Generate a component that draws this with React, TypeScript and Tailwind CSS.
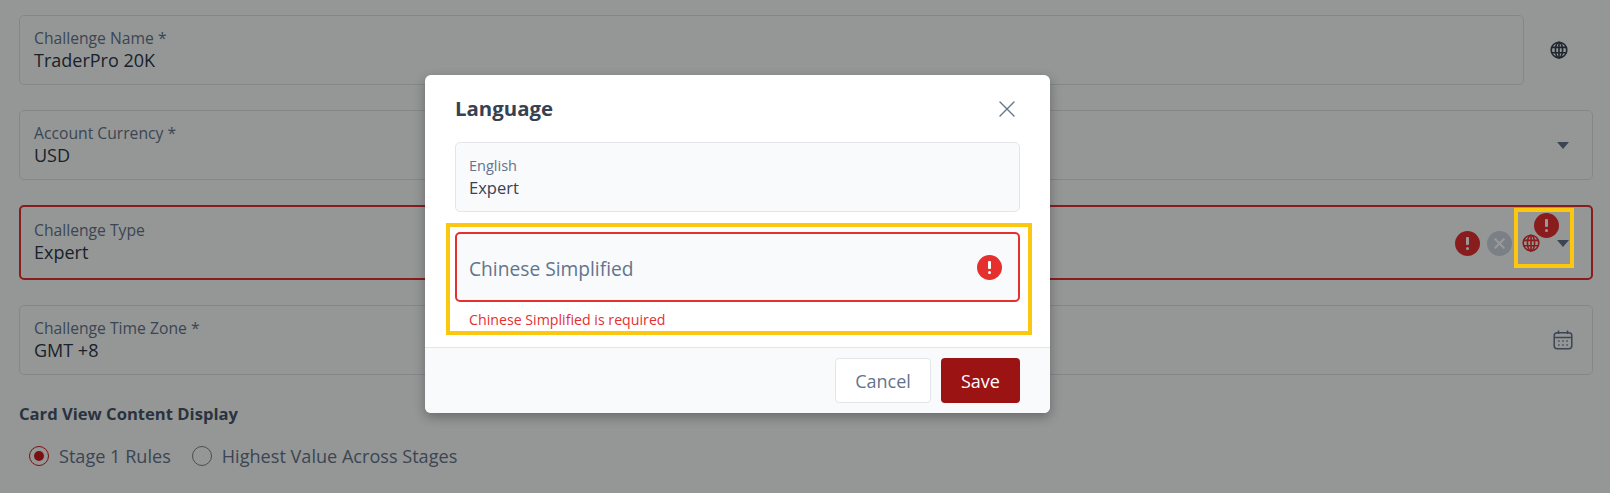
import { X } from "lucide-react";

const font = "font-['Open_Sans','Noto_Sans',sans-serif]";

function GlobeIcon({ className }: { className: string }) {
  return (
    <svg viewBox="0 0 24 24" fill="none" stroke="currentColor" strokeWidth="2.2" className={className}>
      <circle cx="12" cy="12" r="10.4" />
      <ellipse cx="12" cy="12" rx="4.8" ry="10.4" />
      <path d="M12 1.6v20.8M2 8.4h20M2 15.6h20" />
    </svg>
  );
}

function CalendarIcon({ className }: { className: string }) {
  return (
    <svg viewBox="0 0 20 20" fill="none" stroke="currentColor" strokeWidth="1.5" className={className}>
      <rect x="1.2" y="2.8" width="17.6" height="16" rx="3" />
      <path d="M5.5 0.6v3.4M14.5 0.6v3.4M1.2 7.6h17.6" />
      <path strokeWidth="1.6" d="M5.2 11h1.4M9.3 11h1.4M13.4 11h1.4M5.2 15h1.4M9.3 15h1.4M13.4 15h1.4" />
    </svg>
  );
}

function AlertDot({ className }: { className: string }) {
  return (
    <span className={`flex h-[25px] w-[25px] shrink-0 flex-col items-center justify-center rounded-full text-white ${className}`}>
      <span className="h-[8px] w-[3px] rounded-[1px] bg-white" />
      <span className="mt-[2px] h-[3px] w-[3px] rounded-full bg-white" />
    </span>
  );
}

function Caret() {
  return (
    <span className="flex w-[20px] justify-center">
      <span className="h-0 w-0 border-x-[6px] border-t-[7px] border-x-transparent border-t-[#64748b]" />
    </span>
  );
}

function Field({
  label,
  value,
  invalid,
  children,
}: {
  label: string;
  value: string;
  invalid?: boolean;
  children?: React.ReactNode;
}) {
  return (
    <div
      className={`flex items-center rounded-[5px] bg-[#f9fcfa] ${
        invalid ? "h-[75px] border-2 border-[#e53030] pl-[13px] pr-[18px]" : "h-[70px] border border-[#dde1e6] pl-[14px] pr-[19px]"
      }`}
    >
      <div className={`flex-1 ${invalid ? "pb-[2px]" : ""}`}>
        <div className="text-[15.7px] leading-[20px] text-[#64748b]">{label}</div>
        <div className="text-[18px] leading-[24px] text-[#2d3748]">{value}</div>
      </div>
      {children}
    </div>
  );
}

export default function App() {
  return (
    <div className={`relative h-[493px] w-[1610px] overflow-hidden bg-[#f9fcfa] ${font}`}>
      <div className="flex flex-col gap-[25px] pl-[19px] pr-[17px] pt-[15px]">
        <div className="flex items-center">
          <div className="flex-1">
            <Field label="Challenge Name *" value="TraderPro 20K" />
          </div>
          <div className="flex w-[69px] justify-center">
            <GlobeIcon className="h-[18px] w-[18px] text-[#374151]" />
          </div>
        </div>
        <Field label="Account Currency *" value="USD">
          <Caret />
        </Field>
        <div className="relative">
          <Field label="Challenge Type" value="Expert" invalid>
            <div className="flex items-center pt-[1px]">
              <AlertDot className="bg-[#e53030]" />
              <span className="ml-[7px] flex h-[25px] w-[25px] items-center justify-center rounded-full bg-[#cbd5e0]">
                <X className="h-[17px] w-[17px] text-white" strokeWidth={3} />
              </span>
              <GlobeIcon className="ml-[10px] h-[18px] w-[18px] text-[#e53030]" />
              <span className="ml-[13px]">
                <Caret />
              </span>
            </div>
          </Field>
          <AlertDot className="absolute right-[34px] top-[8px] bg-[#e53030]" />
        </div>
        <Field label="Challenge Time Zone *" value="GMT +8">
          <CalendarIcon className="h-[20px] w-[20px] text-[#64748b]" />
        </Field>
        <div className="mt-[2px]">
          <h3 className="text-[16.6px] font-bold leading-[24px] text-[#475569]">Card View Content Display</h3>
          <div className="mt-[18px] flex items-center pl-[10px] text-[18.1px] leading-[24px] text-[#64748b]">
            <span className="flex h-[20px] w-[20px] items-center justify-center rounded-full border-[1.5px] border-[#cb1c1c]">
              <span className="h-[10px] w-[10px] rounded-full bg-[#cb1c1c]" />
            </span>
            <span className="ml-[10px]">Stage 1 Rules</span>
            <span className="ml-[21px] h-[20px] w-[20px] rounded-full border-[1.5px] border-[#808080]" />
            <span className="ml-[10px]">Highest Value Across Stages</span>
          </div>
        </div>
      </div>

      {/* Backdrop */}
      <div className="absolute inset-0 bg-black/40" />

      {/* Modal */}
      <div className="absolute left-[425px] top-[75px] flex h-[338px] w-[625px] flex-col rounded-[6px] bg-white shadow-[0_4px_12px_rgba(0,0,0,0.3)]">
        <div className="flex h-[67px] items-center justify-between pl-[30px] pr-[29px]">
          <h2 className="text-[20.4px] font-bold text-[#374151]">Language</h2>
          <X className="h-[28px] w-[28px] text-[#64748b]" strokeWidth={1.2} />
        </div>
        <div className="flex-1 px-[30px]">
          <div className="flex h-[70px] flex-col justify-center rounded-[5px] border border-[#e2e5ea] bg-[#f9fafc] pl-[13px] pt-[2px]">
            <div className="text-[14.5px] leading-[20px] text-[#64748b]">English</div>
            <div className="text-[16.5px] leading-[24px] text-[#374151]">Expert</div>
          </div>
          <div className="mt-[20px] flex h-[70px] items-center justify-between rounded-[5px] border-2 border-[#e53030] bg-[#f9fafc] pl-[12px] pr-[16px]">
            <span className="pt-[4px] text-[19.2px] text-[#64748b]">Chinese Simplified</span>
            <AlertDot className="bg-[#e53030]" />
          </div>
          <div className="pl-[14px] pt-[8px] text-[14.2px] leading-[20px] text-[#e53030]">Chinese Simplified is required</div>
        </div>
        <div className="flex h-[66px] items-center justify-end gap-[10px] rounded-b-[6px] border-t border-[#e2e5ea] bg-[#f9fafc] pr-[30px]">
          <button className="h-[45px] w-[96px] rounded-[4px] border border-[#e2e5ea] bg-white pt-[1px] text-[18px] text-[#64748b]">Cancel</button>
          <button className="h-[45px] w-[79px] rounded-[4px] bg-[#9b1313] pt-[1px] text-[18px] text-white">Save</button>
        </div>
      </div>

      {/* Annotation boxes */}
      <div className="absolute left-[446px] top-[223px] h-[112px] w-[586px] border-4 border-[#fcc80f]" />
      <div className="absolute left-[1514px] top-[208px] h-[60px] w-[60px] border-4 border-[#fcc80f]" />
    </div>
  );
}
